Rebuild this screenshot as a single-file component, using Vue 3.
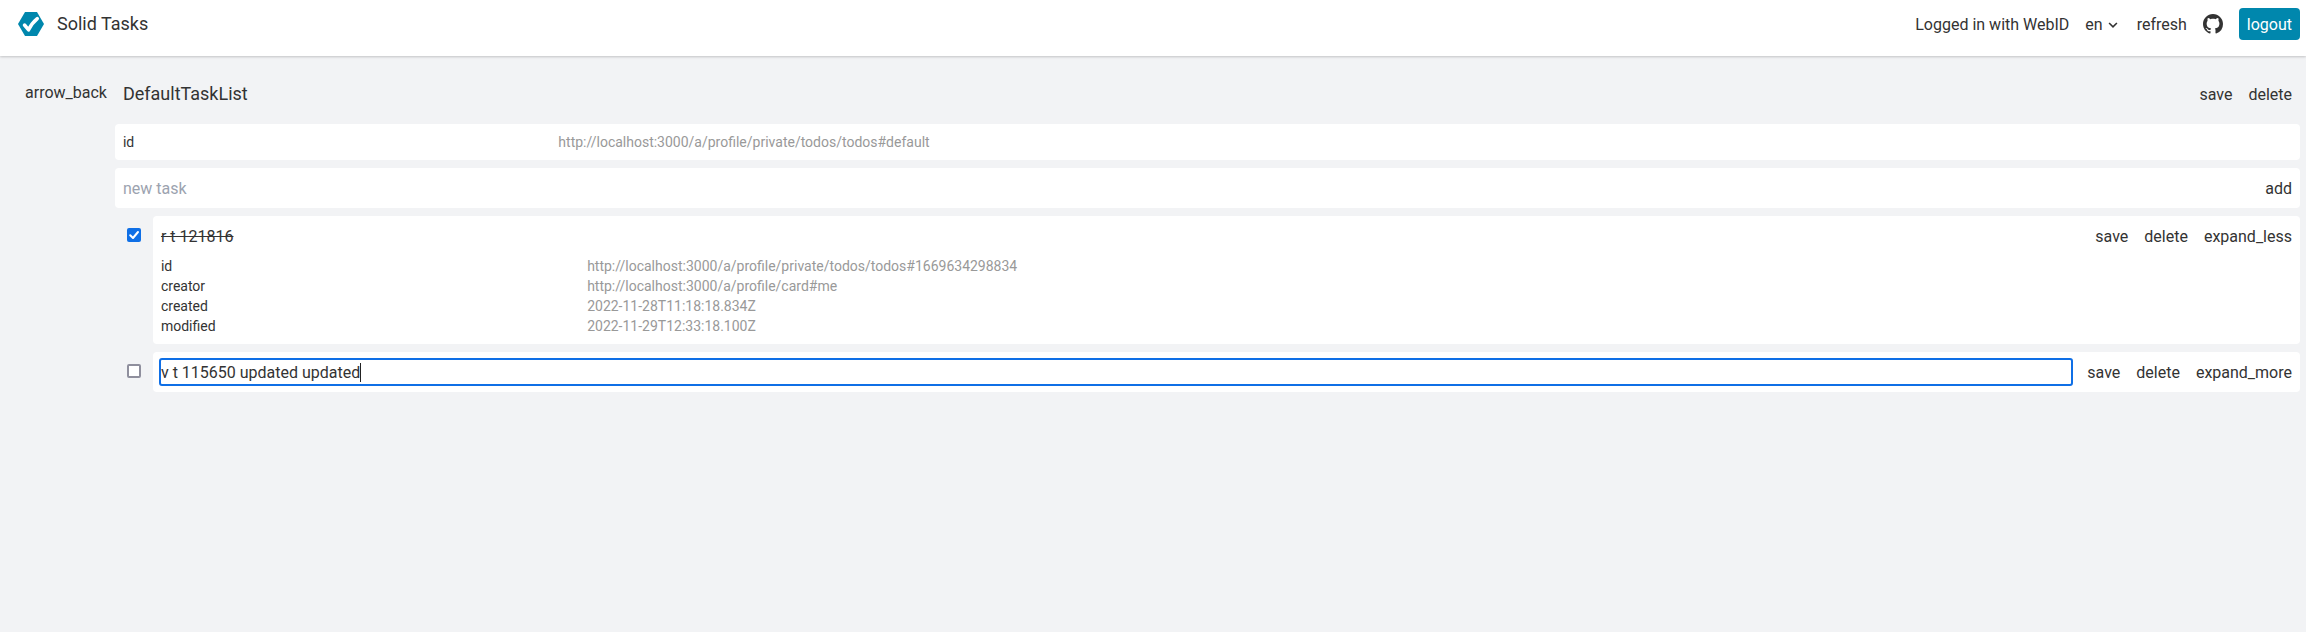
<script setup>
import { ref } from 'vue'

const listInfo = [{ key: 'id', value: 'http://localhost:3000/a/profile/private/todos/todos#default' }]

const tasks = ref([
  {
    title: 'r t 121816',
    done: true,
    expanded: true,
    info: [
      { key: 'id', value: 'http://localhost:3000/a/profile/private/todos/todos#1669634298834' },
      { key: 'creator', value: 'http://localhost:3000/a/profile/card#me' },
      { key: 'created', value: '2022-11-28T11:18:18.834Z' },
      { key: 'modified', value: '2022-11-29T12:33:18.100Z' },
    ],
  },
  { title: 'v t 115650 updated updated', done: false, expanded: false, editing: true, info: [] },
])
</script>

<template>
  <div class="page">
    <header class="header">
      <svg class="logo" viewBox="0 0 26 24">
        <path d="M7 0H19L26 12L19 24H7L0 12Z" fill="#0087ad" />
        <path d="M6.5 13L10.6 17.8Q13.6 11.3 19.3 6.6" fill="none" stroke="#fff" stroke-width="3.5" stroke-linecap="round" stroke-linejoin="round" />
      </svg>
      <h1 class="brand">Solid Tasks</h1>
      <nav class="nav">
        <span class="btn">Logged in with WebID</span>
        <button class="btn lang">
          <span>en</span>
          <svg class="chevron" viewBox="0 0 10 6"><path d="M1.1 1L5 4.8L8.9 1" fill="none" stroke="#333" stroke-width="1.6" /></svg>
        </button>
        <button class="btn">refresh</button>
        <a class="btn github">
          <svg viewBox="0 0 16 16" width="20" height="20"><path fill="#333" d="M8 0C3.58 0 0 3.58 0 8c0 3.54 2.29 6.53 5.47 7.59.4.07.55-.17.55-.38 0-.19-.01-.82-.01-1.49-2.01.37-2.53-.49-2.69-.94-.09-.23-.48-.94-.82-1.13-.28-.15-.68-.52-.01-.53.63-.01 1.08.58 1.23.82.72 1.21 1.87.87 2.33.66.07-.52.28-.87.51-1.07-1.78-.2-3.64-.89-3.64-3.95 0-.87.31-1.59.82-2.15-.08-.2-.36-1.02.08-2.12 0 0 .67-.21 2.2.82.64-.18 1.32-.27 2-.27s1.36.09 2 .27c1.53-1.04 2.2-.82 2.2-.82.44 1.1.16 1.92.08 2.12.51.56.82 1.27.82 2.15 0 3.07-1.87 3.75-3.65 3.95.29.25.54.73.54 1.48 0 1.07-.01 1.93-.01 2.2 0 .21.15.46.55.38A8.01 8.01 0 0 0 16 8c0-4.42-3.58-8-8-8z" /></svg>
        </a>
        <button class="btn primary">logout</button>
      </nav>
    </header>

    <main class="main">
      <button class="btn">arrow_back</button>
      <section class="list">
        <div class="row heading">
          <h2 class="title">DefaultTaskList</h2>
          <button class="btn">save</button>
          <button class="btn">delete</button>
        </div>

        <dl class="card info summary">
          <template v-for="item in listInfo" :key="item.key">
            <dt>{{ item.key }}</dt>
            <dd>{{ item.value }}</dd>
          </template>
        </dl>

        <div class="card row entry">
          <input class="field" placeholder="new task" />
          <button class="btn">add</button>
        </div>

        <div v-for="task in tasks" :key="task.title" class="task">
          <span class="check" :class="{ checked: task.done }">
            <svg v-if="task.done" viewBox="0 0 14 14"><path d="M3.2 7.2L6 10L11 4" fill="none" stroke="#fff" stroke-width="2" stroke-linecap="round" stroke-linejoin="round" /></svg>
          </span>
          <div class="card body">
            <div class="row entry">
              <div class="field" :class="{ done: task.done, editing: task.editing }">
                <span class="text">{{ task.title }}</span><i v-if="task.editing" class="caret"></i>
              </div>
              <button class="btn">save</button>
              <button class="btn">delete</button>
              <button class="btn">{{ task.expanded ? 'expand_less' : 'expand_more' }}</button>
            </div>
            <dl v-if="task.expanded" class="info details">
              <template v-for="item in task.info" :key="item.key">
                <dt>{{ item.key }}</dt>
                <dd>{{ item.value }}</dd>
              </template>
            </dl>
          </div>
        </div>
      </section>
    </main>
  </div>
</template>

<style>
body {
  margin: 0;
  background: #f2f3f5;
}
</style>

<style scoped>
.page {
  min-height: 632px;
  background: #f2f3f5;
  color: #333;
  font: 16px/24px Roboto, sans-serif;
}
.page *,
.page {
  box-sizing: border-box;
}
h1, h2, dl, dd {
  margin: 0;
  font-weight: 400;
}
.header {
  display: flex;
  align-items: center;
  height: 56px;
  padding: 0 6px 8px 18px;
  background: #fff;
  box-shadow: 0 1px 3px rgba(0, 0, 0, 0.1), 0 1px 2px rgba(0, 0, 0, 0.1);
}
.logo {
  width: 26px;
  height: 24px;
}
.brand {
  margin-left: 13px;
  font-size: 18px;
  line-height: 28px;
}
.nav {
  display: flex;
  align-items: center;
  margin-left: auto;
}
.btn {
  flex: none;
  height: 32px;
  padding: 5px 8px 3px;
  border: 0;
  border-radius: 4px;
  background: transparent;
  color: inherit;
  font: inherit;
  white-space: nowrap;
}
.lang {
  display: flex;
  align-items: center;
  padding-right: 11px;
}
.chevron {
  width: 10px;
  height: 6px;
  margin: 0 0 0 5px;
}
.github {
  display: flex;
  align-items: center;
  padding: 4px 8px;
}
.primary {
  margin-left: 8px;
  background: #0087ad;
  color: #fff;
}
.main {
  display: flex;
  align-items: flex-start;
  padding: 20px 6px 0 17px;
}
.list {
  flex: 1;
  display: flex;
  flex-direction: column;
  gap: 8px;
}
.row {
  display: flex;
  align-items: center;
}
.heading {
  height: 40px;
  margin: -2px 0 2px;
}
.title {
  flex: 1;
  padding-left: 8px;
  font-size: 18px;
  line-height: 28px;
}
.card {
  border-radius: 4px;
  background: #fff;
}
.info {
  display: grid;
  grid-template-columns: 20% 80%;
  padding: 8px;
  font-size: 14px;
  line-height: 20px;
}
.info dd {
  color: #999;
}
.summary {
  padding-right: 0;
}
.details {
  padding-top: 0;
}
.entry {
  height: 40px;
  padding-left: 8px;
}
.field {
  flex: 1;
  display: flex;
  align-items: center;
  height: 24px;
  margin-right: 8px;
  padding: 1px 0 0;
  border: 0;
  background: transparent;
  color: inherit;
  font: inherit;
  white-space: pre;
}
.text {
  height: 23px;
}
.field::placeholder {
  color: #9ca3af;
  opacity: 1;
}
.done .text {
  text-decoration: line-through;
}
.editing {
  outline: 2px solid #0f6fe6;
  border-radius: 1px;
}
.caret {
  width: 1px;
  height: 19px;
  background: #222;
}
.task {
  display: flex;
}
.body {
  flex: 1;
}
.check {
  flex: none;
  width: 14px;
  height: 14px;
  margin: 12px 12px 0;
  border: 2px solid #8f8f9d;
  border-radius: 2px;
  background: #fff;
}
.checked {
  border: 0;
  background: #0f6fe6;
}
.check svg {
  display: block;
}
</style>
